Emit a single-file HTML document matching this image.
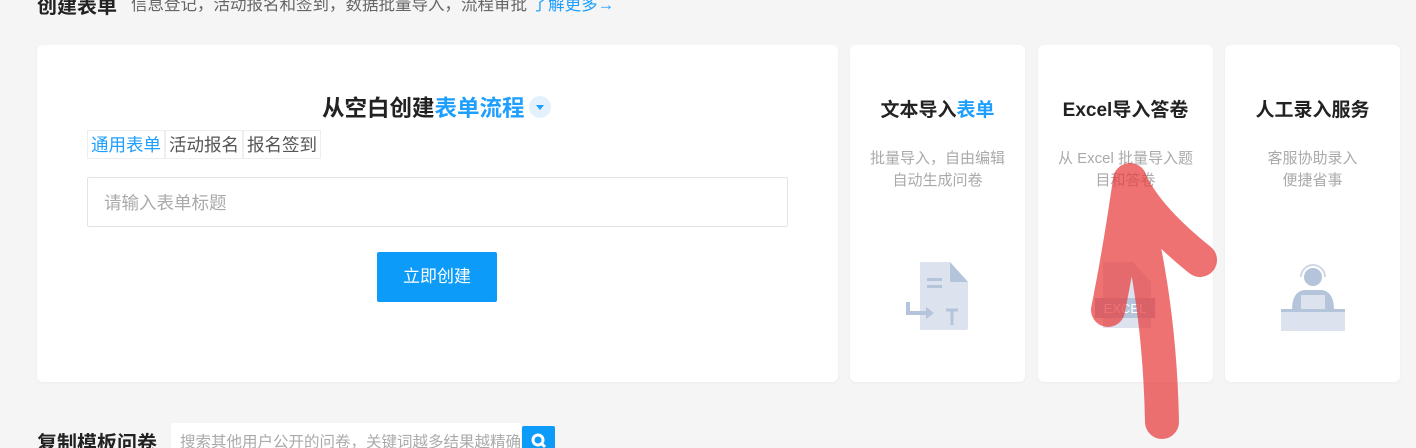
<!DOCTYPE html>
<html><head><meta charset="utf-8"><style>
*{margin:0;padding:0;box-sizing:border-box}
html,body{width:1416px;height:448px;overflow:hidden}
body{background:#f5f5f5;font-family:"Liberation Sans","Noto Sans CJK SC",sans-serif;position:relative;color:#333}
.abs{position:absolute}
.card{position:absolute;background:#fff;border-radius:6px;box-shadow:0 1px 3px rgba(0,0,0,.04)}
.side h3{position:absolute;top:50px;width:100%;text-align:center;font-size:19px;font-weight:bold;color:#222}
.side p{position:absolute;top:103px;width:100%;text-align:center;font-size:15px;line-height:22px;color:#aaa}
.side svg{position:absolute;top:215px;left:50%;transform:translateX(-50%)}
</style></head><body>
<div class="abs" style="left:37px;top:-10px;font-size:20px;font-weight:bold;color:#222">创建表单</div>
<div class="abs" style="left:131px;top:-9px;font-size:16.5px;color:#666">信息登记，活动报名和签到，数据批量导入，流程审批 <span style="color:#1e9fff">了解更多→</span></div>

<div class="card" style="left:37px;top:45px;width:801px;height:337px">
 <div class="abs" style="left:285px;top:46px;font-size:22.5px;font-weight:bold;color:#222">从空白创建<span style="color:#1e9fff">表单流程</span></div>
 <div class="abs" style="left:492px;top:51px;width:22px;height:22px;border-radius:50%;background:#e3f1fd"><div style="margin:9px auto 0;width:0;height:0;border-left:4px solid transparent;border-right:4px solid transparent;border-top:5px solid #1e9fff"></div></div>
 <div class="abs" style="left:50px;top:85px;display:flex;font-size:17.5px;color:#555">
  <div style="border:1px solid #eee;padding:1px 3px;color:#1e9fff">通用表单</div>
  <div style="border:1px solid #eee;padding:1px 3px">活动报名</div>
  <div style="border:1px solid #eee;padding:1px 3px">报名签到</div>
 </div>
 <div class="abs" style="left:50px;top:132px;width:701px;height:50px;border:1px solid #e3e3e3;border-radius:2px;font-size:17.5px;color:#aaa;padding:12px 16px">请输入表单标题</div>
 <div class="abs" style="left:340px;top:207px;width:120px;height:50px;background:#0d9bfa;color:#fff;font-size:17px;text-align:center;line-height:50px;border-radius:2px">立即创建</div>
</div>

<div class="card side" style="left:850px;top:45px;width:175px;height:337px">
 <h3>文本导入<span style="color:#1e9fff">表单</span></h3><p>批量导入，自由编辑<br>自动生成问卷</p>
 <svg width="64" height="72" viewBox="0 0 64 72"><path d="M14 2h30l18 20v46a2 2 0 0 1-2 2H14z" fill="#dce3ee"/><path d="M44 2l18 20H44z" fill="#b4c4da"/><rect x="21" y="18" width="15" height="3" fill="#b4c4da"/><rect x="21" y="25" width="15" height="3" fill="#b4c4da"/><path d="M2 42v11h20" stroke="#b4c4da" stroke-width="4" fill="none"/><path d="M20 47l8 6-8 6z" fill="#b4c4da"/><path d="M40 50h12M46 50v15" stroke="#b4c4da" stroke-width="3"/></svg>
</div>
<div class="card side" style="left:1038px;top:45px;width:175px;height:337px">
 <h3>Excel导入答卷</h3><p>从 Excel 批量导入题<br>目和答卷</p>
 <svg width="66" height="72" viewBox="0 0 66 72"><path d="M10 2h30l18 20v46H10z" fill="#dce3ee"/><rect x="2" y="38" width="60" height="20" fill="#b4c4da"/><text x="32" y="53" font-size="13" text-anchor="middle" fill="#fff" font-family="Liberation Sans">EXCEL</text></svg>
</div>
<div class="card side" style="left:1225px;top:45px;width:175px;height:337px">
 <h3>人工录入服务</h3><p>客服协助录入<br>便捷省事</p>
 <svg width="66" height="72" viewBox="0 0 66 72"><path d="M21 17a12 12 0 0 1 24 0" stroke="#cfd8e4" stroke-width="2" fill="none"/><circle cx="33" cy="17" r="9" fill="#b4c4da"/><path d="M12 50q0-18 12-20h18q12 2 12 20z" fill="#b4c4da"/><rect x="21" y="35" width="24" height="15" fill="#dce3ee"/><rect x="1" y="49" width="64" height="22" fill="#dce3ee"/><rect x="1" y="49" width="64" height="3" fill="#b4c4da"/></svg>
</div>

<svg class="abs" style="left:1080px;top:160px" width="160" height="280"><path d="M82 262 Q80 160 60 70 L50 20 Q40 90 28 150 M52 25 Q70 60 120 100" stroke="rgba(232,60,60,.72)" stroke-width="34" fill="none" stroke-linecap="round" stroke-linejoin="round"/></svg>

<div class="abs" style="left:37px;top:427px;font-size:20px;font-weight:bold;color:#222">复制模板问卷</div>
<div class="abs" style="left:171px;top:423px;width:350px;height:30px;background:#fff;font-size:15.5px;color:#aaa;padding:7px 9px;white-space:nowrap;overflow:hidden">搜索其他用户公开的问卷，关键词越多结果越精确</div>
<div class="abs" style="left:522px;top:426px;width:33px;height:30px;background:#0d9bfa;border-radius:2px"><svg width="33" height="30"><circle cx="16" cy="14" r="5" stroke="#fff" stroke-width="3" fill="none"/><path d="M19 17l4 4" stroke="#fff" stroke-width="3"/></svg></div>
</body></html>
